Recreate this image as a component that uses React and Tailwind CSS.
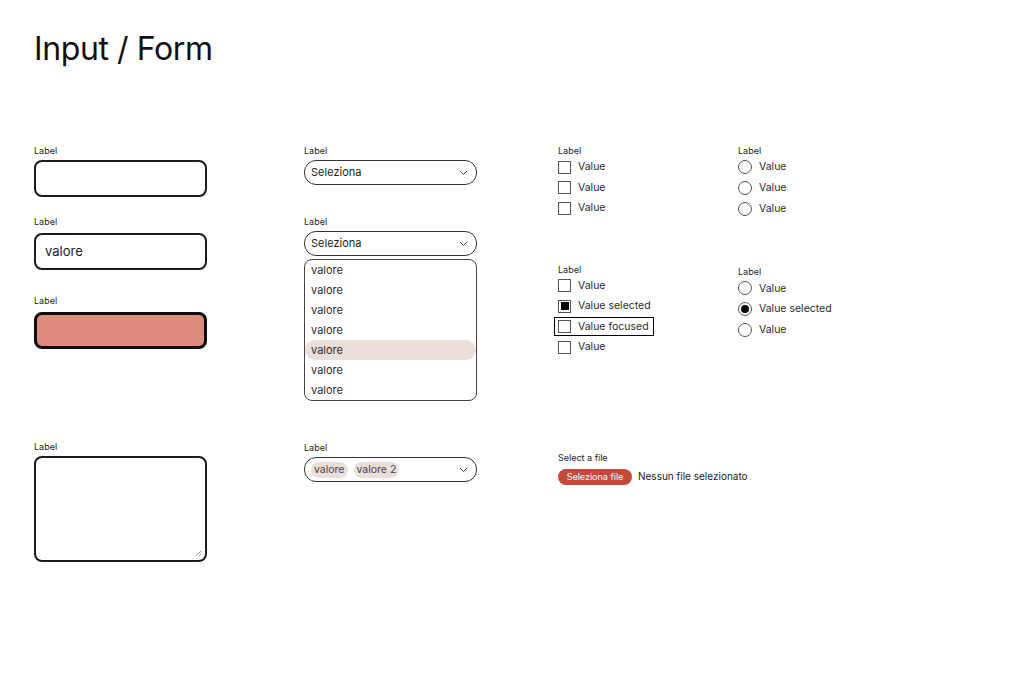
import React from "react";

const font = { fontFamily: "Inter, 'Noto Sans', sans-serif" };

function Label({ children, className = "" }) {
  return (
    <div className={`text-[9px] leading-[12px] text-[#1c1c1c] ${className}`}>
      {children}
    </div>
  );
}

function Chevron() {
  return (
    <svg width="9" height="6" viewBox="0 0 9 6" className="shrink-0">
      <polyline
        points="1,1 4.5,4.5 8,1"
        fill="none"
        stroke="#444"
        strokeWidth="1"
      />
    </svg>
  );
}

function Select({ className = "", children }) {
  return (
    <div
      className={`h-[25px] w-[173px] rounded-[12px] border border-[#333] flex items-center justify-between pl-[6px] pr-[8px] text-[11px] text-[#222] ${className}`}
    >
      <div className="flex items-center gap-[6px]">{children}</div>
      <Chevron />
    </div>
  );
}

function Checkbox({ label, checked, focused }) {
  return (
    <div className="h-[20.5px] flex items-center">
      <div
        className={`flex items-center gap-[7px] h-[19px] ${
          focused
            ? "border-[1.5px] border-black -ml-[4px] pl-[3px] pr-[4px]"
            : ""
        }`}
      >
        <div className="w-[13px] h-[13px] border border-[#555] bg-white flex items-center justify-center">
          {checked && <div className="w-[8px] h-[8px] bg-black" />}
        </div>
        <span className="text-[10.5px] text-[#2a2a2a]">{label}</span>
      </div>
    </div>
  );
}

function Radio({ label, checked }) {
  return (
    <div className="h-[20.7px] flex items-center gap-[7px]">
      <div className="w-[14px] h-[14px] rounded-full border border-[#555] flex items-center justify-center">
        {checked && <div className="w-[8px] h-[8px] rounded-full bg-black" />}
      </div>
      <span className="text-[10.5px] text-[#2a2a2a]">{label}</span>
    </div>
  );
}

export default function App() {
  const options = ["valore", "valore", "valore", "valore", "valore", "valore", "valore"];

  return (
    <div className="w-[1024px] h-[678px] bg-white overflow-hidden pl-[34px] pt-[29px]" style={font}>
      <h1 className="text-[32px] leading-[40px] tracking-[-0.4px] text-[#111] font-normal h-[40px]">
        Input / Form
      </h1>

      <div className="flex mt-[76px]">
        {/* column 1: text inputs */}
        <div className="w-[270px] flex flex-col">
          <Label className="mb-[3px]">Label</Label>
          <div className="w-[173px] h-[37px] rounded-[8px] border-2 border-[#1a1a1a] bg-white" />

          <Label className="mt-[19px] mb-[5px]">Label</Label>
          <div className="w-[173px] h-[37px] rounded-[8px] border-2 border-[#1a1a1a] bg-white flex items-center pl-[9px] text-[13px] text-[#1a1a1a]">
            valore
          </div>

          <Label className="mt-[25px] mb-[5px]">Label</Label>
          <div className="w-[173px] h-[37px] rounded-[8px] border-[3px] border-[#0d0d0d] bg-[#dd8c7e]" />

          <Label className="mt-[92px] mb-[3px]">Label</Label>
          <div className="relative w-[173px] h-[106px] rounded-[8px] border-2 border-[#1a1a1a] bg-white">
            <svg width="7" height="7" viewBox="0 0 7 7" className="absolute right-[3px] bottom-[3px]">
              <line x1="1" y1="6" x2="6" y2="1" stroke="#777" strokeWidth="0.8" />
              <line x1="4" y1="6" x2="6" y2="4" stroke="#777" strokeWidth="0.8" />
            </svg>
          </div>
        </div>

        {/* column 2: selects */}
        <div className="w-[254px] flex flex-col">
          <Label className="mb-[3px]">Label</Label>
          <Select>Seleziona</Select>

          <Label className="mt-[31px] mb-[3px]">Label</Label>
          <Select>Seleziona</Select>
          <div className="mt-[3px] w-[173px] rounded-[8px] border border-[#444] bg-white flex flex-col">
            {options.map((o, i) => (
              <div
                key={i}
                className={`h-[20px] flex items-center pl-[6px] text-[11px] text-[#2a2a2a] rounded-full ${
                  i === 4 ? "bg-[#ebdfdc]" : ""
                }`}
              >
                {o}
              </div>
            ))}
          </div>

          <Label className="mt-[41px] mb-[3px]">Label</Label>
          <Select>
            <span className="h-[16px] px-[3px] rounded-full bg-[#ebdfdc] text-[10.5px] text-[#444] flex items-center">valore</span>
            <span className="h-[16px] px-[3px] rounded-full bg-[#ebdfdc] text-[10.5px] text-[#444] flex items-center">valore 2</span>
          </Select>
        </div>

        {/* column 3: checkboxes + file */}
        <div className="w-[180px] flex flex-col">
          <Label>Label</Label>
          <Checkbox label="Value" />
          <Checkbox label="Value" />
          <Checkbox label="Value" />

          <Label className="mt-[45px]">Label</Label>
          <Checkbox label="Value" />
          <Checkbox label="Value selected" checked />
          <Checkbox label="Value focused" focused />
          <Checkbox label="Value" />

          <Label className="mt-[94px] mb-[5px]">Select a file</Label>
          <div className="flex items-center gap-[6px] whitespace-nowrap">
            <div className="h-[16px] w-[74px] shrink-0 rounded-full bg-[#c4493a] text-white text-[9px] flex items-center justify-center">
              Seleziona file
            </div>
            <span className="text-[10px] text-[#1a1a1a]">Nessun file selezionato</span>
          </div>
        </div>

        {/* column 4: radios */}
        <div className="w-[180px] flex flex-col">
          <Label>Label</Label>
          <Radio label="Value" />
          <Radio label="Value" />
          <Radio label="Value" />

          <Label className="mt-[47px]">Label</Label>
          <Radio label="Value" />
          <Radio label="Value selected" checked />
          <Radio label="Value" />
        </div>
      </div>
    </div>
  );
}
